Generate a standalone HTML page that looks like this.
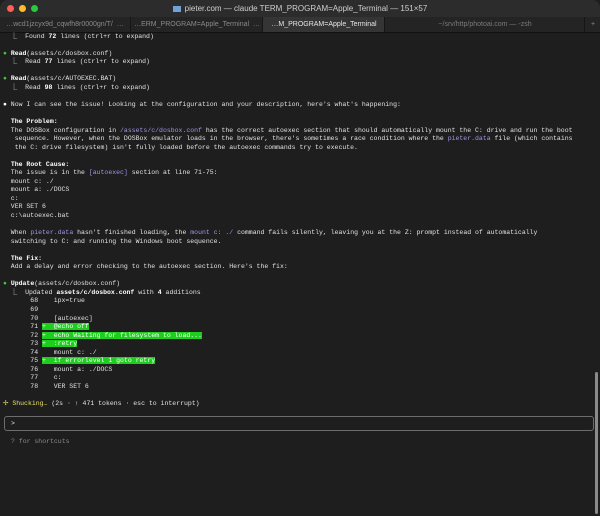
<!DOCTYPE html>
<html><head><style>
html,body{margin:0;padding:0;width:600px;height:516px;overflow:hidden;background:#1e1e1e;}
#title{position:absolute;left:0;top:0;width:600px;height:17px;background:#2c2c2c;border-radius:8px 8px 0 0;font-family:"Liberation Sans",sans-serif;font-size:8px;color:#cfcfcf;text-align:center;line-height:17px;}
.dot{position:absolute;top:5px;width:7px;height:7px;border-radius:50%;}
#tabs{position:absolute;left:0;top:17px;width:600px;height:15px;background:#242424;font-family:"Liberation Sans",sans-serif;font-size:7px;color:#8a8a8a;border-bottom:1px solid #111;}
.tab{position:absolute;top:0;height:15px;line-height:15px;text-align:center;border-left:1px solid #161616;}
pre{position:absolute;left:3px;top:32.5px;margin:0;font-family:"Liberation Mono",monospace;font-size:6.5px;line-height:8.55px;color:#e2e2e2;}
b{color:#fff;font-weight:bold}
.g{color:#3fc23f}
.p{color:#9d96e6}
.add{background:#1ecd1e;color:#fff}
.y{color:#e8e06a}
.dim{color:#8a8a8a}
#box{position:absolute;left:4px;top:416px;width:590px;height:15px;border:1px solid #6d6d6d;border-radius:3px;box-sizing:border-box;}
#sb{position:absolute;left:595px;top:372px;width:3px;height:142px;background:#8a8a8a;border-radius:2px;}
</style></head><body>
<div id="title"><span class="dot" style="left:7px;background:#fe5f57"></span><span class="dot" style="left:19px;background:#febc2e"></span><span class="dot" style="left:31px;background:#28c840"></span><span style="display:inline-block;width:8px;height:6px;background:#6fa3d6;margin-right:4px;vertical-align:-1px"></span>pieter.com — claude TERM_PROGRAM=Apple_Terminal — 151×57</div>
<div id="tabs">
<div class="tab" style="left:0;width:130px;border-left:none">…wcd1jzcyx9d_cqwfh8r0000gn/T/ &nbsp;…</div>
<div class="tab" style="left:130px;width:132px">…ERM_PROGRAM=Apple_Terminal &nbsp;…</div>
<div class="tab" style="left:262px;width:122px;background:#353535;color:#e6e6e6">…M_PROGRAM=Apple_Terminal</div>
<div class="tab" style="left:384px;width:200px;color:#7a7a7a">~/srv/http/photoai.com — -zsh</div>
<div class="tab" style="left:584px;width:16px">+</div>
</div>
<pre>  ⎿  Found <b>72</b> lines (ctrl+r to expand)

<span class="g">●</span> <b>Read</b>(assets/c/dosbox.conf)
  ⎿  Read <b>77</b> lines (ctrl+r to expand)

<span class="g">●</span> <b>Read</b>(assets/c/AUTOEXEC.BAT)
  ⎿  Read <b>98</b> lines (ctrl+r to expand)

<span style="color:#fff">●</span> Now I can see the issue! Looking at the configuration and your description, here's what's happening:

  <b>The Problem:</b>
  The DOSBox configuration in <span class="p">/assets/c/dosbox.conf</span> has the correct autoexec section that should automatically mount the C: drive and run the boot
   sequence. However, when the DOSBox emulator loads in the browser, there's sometimes a race condition where the <span class="p">pieter.data</span> file (which contains
   the C: drive filesystem) isn't fully loaded before the autoexec commands try to execute.

  <b>The Root Cause:</b>
  The issue is in the <span class="p">[autoexec]</span> section at line 71-75:
  mount c: ./
  mount a: ./DOCS
  c:
  VER SET 6
  c:\autoexec.bat

  When <span class="p">pieter.data</span> hasn't finished loading, the <span class="p">mount c: ./</span> command fails silently, leaving you at the Z: prompt instead of automatically
  switching to C: and running the Windows boot sequence.

  <b>The Fix:</b>
  Add a delay and error checking to the autoexec section. Here's the fix:

<span class="g">●</span> <b>Update</b>(assets/c/dosbox.conf)
  ⎿  Updated <b>assets/c/dosbox.conf</b> with <b>4</b> additions
       68    ipx=true
       69
       70    [autoexec]
       71 <span class="add">+  @echo off</span>
       72 <span class="add">+  echo Waiting for filesystem to load...</span>
       73 <span class="add">+  :retry</span>
       74    mount c: ./
       75 <span class="add">+  if errorlevel 1 goto retry</span>
       76    mount a: ./DOCS
       77    c:
       78    VER SET 6

<span class="y">✢ Shucking…</span> (2s · ↑ 471 tokens · esc to interrupt)

</pre>
<div id="box"></div>
<pre style="top:420px;left:11px">&gt;</pre>
<pre style="top:437.5px;left:11px"><span class="dim">? for shortcuts</span></pre>
<div id="sb"></div>
</body></html>
